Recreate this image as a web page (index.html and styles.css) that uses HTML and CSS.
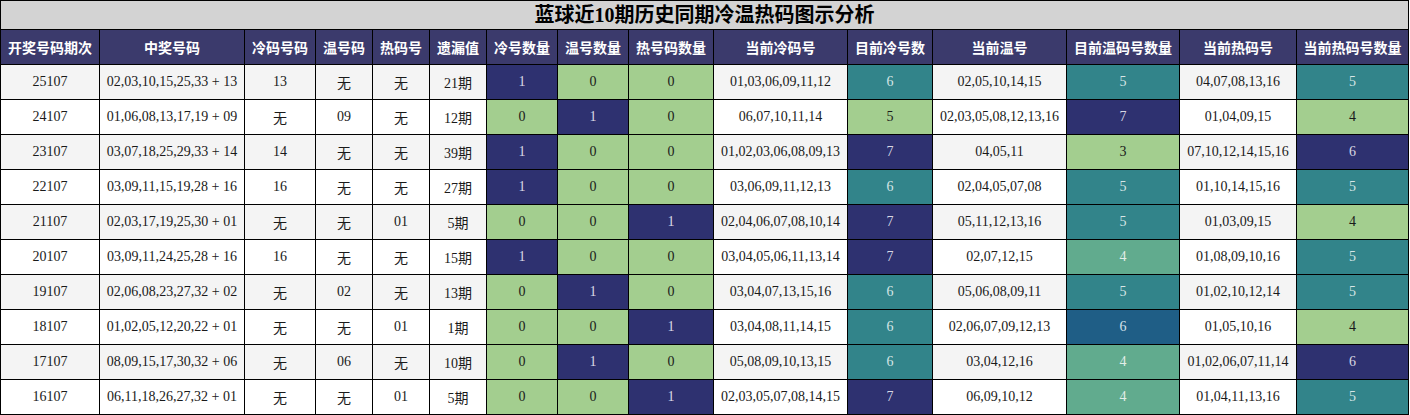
FILE: index.html
```html
<!DOCTYPE html>
<html lang="zh">
<head>
<meta charset="utf-8">
<title>蓝球近10期历史同期冷温热码图示分析</title>
<link rel="stylesheet" href="styles.css">
</head>
<body>
<table class="board">
  <colgroup>
    <col class="w99"><col class="w145"><col class="w71"><col class="w57"><col class="w57"><col class="w57">
    <col class="w71"><col class="w71"><col class="w85"><col class="w134"><col class="w85"><col class="w134">
    <col class="w113"><col class="w117"><col class="w112">
  </colgroup>
  <thead>
    <tr class="title-row"><th colspan="15" class="title">蓝球近10期历史同期冷温热码图示分析</th></tr>
    <tr class="head-row">
      <th>开奖号码期次</th><th>中奖号码</th><th>冷码号码</th><th>温号码</th><th>热码号</th><th>遗漏值</th>
      <th>冷号数量</th><th>温号数量</th><th>热号码数量</th><th>当前冷码号</th><th>目前冷号数</th>
      <th>当前温号</th><th>目前温码号数量</th><th>当前热码号</th><th>当前热码号数量</th>
    </tr>
  </thead>
  <tbody>
    <tr class="alt">
      <td>25107</td><td>02,03,10,15,25,33 + 13</td><td>13</td><td class="cjk">无</td><td class="cjk">无</td><td>21期</td>
      <td class="navy">1</td><td class="lg">0</td><td class="lg">0</td><td>01,03,06,09,11,12</td><td class="teal">6</td>
      <td>02,05,10,14,15</td><td class="teal">5</td><td>04,07,08,13,16</td><td class="teal">5</td>
    </tr>
    <tr>
      <td>24107</td><td>01,06,08,13,17,19 + 09</td><td class="cjk">无</td><td>09</td><td class="cjk">无</td><td>12期</td>
      <td class="lg">0</td><td class="navy">1</td><td class="lg">0</td><td>06,07,10,11,14</td><td class="lg">5</td>
      <td>02,03,05,08,12,13,16</td><td class="navy">7</td><td>01,04,09,15</td><td class="lg">4</td>
    </tr>
    <tr class="alt">
      <td>23107</td><td>03,07,18,25,29,33 + 14</td><td>14</td><td class="cjk">无</td><td class="cjk">无</td><td>39期</td>
      <td class="navy">1</td><td class="lg">0</td><td class="lg">0</td><td>01,02,03,06,08,09,13</td><td class="navy">7</td>
      <td>04,05,11</td><td class="lg">3</td><td>07,10,12,14,15,16</td><td class="navy">6</td>
    </tr>
    <tr>
      <td>22107</td><td>03,09,11,15,19,28 + 16</td><td>16</td><td class="cjk">无</td><td class="cjk">无</td><td>27期</td>
      <td class="navy">1</td><td class="lg">0</td><td class="lg">0</td><td>03,06,09,11,12,13</td><td class="teal">6</td>
      <td>02,04,05,07,08</td><td class="teal">5</td><td>01,10,14,15,16</td><td class="teal">5</td>
    </tr>
    <tr class="alt">
      <td>21107</td><td>02,03,17,19,25,30 + 01</td><td class="cjk">无</td><td class="cjk">无</td><td>01</td><td>5期</td>
      <td class="lg">0</td><td class="lg">0</td><td class="navy">1</td><td>02,04,06,07,08,10,14</td><td class="navy">7</td>
      <td>05,11,12,13,16</td><td class="teal">5</td><td>01,03,09,15</td><td class="lg">4</td>
    </tr>
    <tr>
      <td>20107</td><td>03,09,11,24,25,28 + 16</td><td>16</td><td class="cjk">无</td><td class="cjk">无</td><td>15期</td>
      <td class="navy">1</td><td class="lg">0</td><td class="lg">0</td><td>03,04,05,06,11,13,14</td><td class="navy">7</td>
      <td>02,07,12,15</td><td class="mg">4</td><td>01,08,09,10,16</td><td class="teal">5</td>
    </tr>
    <tr class="alt">
      <td>19107</td><td>02,06,08,23,27,32 + 02</td><td class="cjk">无</td><td>02</td><td class="cjk">无</td><td>13期</td>
      <td class="lg">0</td><td class="navy">1</td><td class="lg">0</td><td>03,04,07,13,15,16</td><td class="teal">6</td>
      <td>05,06,08,09,11</td><td class="teal">5</td><td>01,02,10,12,14</td><td class="teal">5</td>
    </tr>
    <tr>
      <td>18107</td><td>01,02,05,12,20,22 + 01</td><td class="cjk">无</td><td class="cjk">无</td><td>01</td><td>1期</td>
      <td class="lg">0</td><td class="lg">0</td><td class="navy">1</td><td>03,04,08,11,14,15</td><td class="teal">6</td>
      <td>02,06,07,09,12,13</td><td class="blue">6</td><td>01,05,10,16</td><td class="lg">4</td>
    </tr>
    <tr class="alt">
      <td>17107</td><td>08,09,15,17,30,32 + 06</td><td class="cjk">无</td><td>06</td><td class="cjk">无</td><td>10期</td>
      <td class="lg">0</td><td class="navy">1</td><td class="lg">0</td><td>05,08,09,10,13,15</td><td class="teal">6</td>
      <td>03,04,12,16</td><td class="mg">4</td><td>01,02,06,07,11,14</td><td class="navy">6</td>
    </tr>
    <tr>
      <td>16107</td><td>06,11,18,26,27,32 + 01</td><td class="cjk">无</td><td class="cjk">无</td><td>01</td><td>5期</td>
      <td class="lg">0</td><td class="lg">0</td><td class="navy">1</td><td>02,03,05,07,08,14,15</td><td class="navy">7</td>
      <td>06,09,10,12</td><td class="mg">4</td><td>01,04,11,13,16</td><td class="teal">5</td>
    </tr>
  </tbody>
</table>
</body>
</html>
```

FILE: styles.css
```css
html, body {
  margin: 0;
  padding: 0;
  background: #ffffff;
}

.board {
  border-collapse: collapse;
  table-layout: fixed;
  width: 1409px;
  font-family: "Liberation Serif", "Noto Sans CJK SC", serif;
  font-size: 14px;
  color: #1a1a1a;
}

.w99 { width: 99px; }
.w145 { width: 145px; }
.w71 { width: 71px; }
.w57 { width: 57px; }
.w85 { width: 85px; }
.w134 { width: 134px; }
.w113 { width: 113px; }
.w117 { width: 117px; }
.w112 { width: 112px; }

.board th,
.board td {
  border: 1px solid #000000;
  padding: 0 2px;
  text-align: center;
  vertical-align: middle;
  white-space: nowrap;
  overflow: hidden;
}

.title-row { height: 29px; }

.title {
  background: #d3d3d3;
  color: #000000;
  font-family: "Liberation Serif", "Noto Sans CJK SC", serif;
  font-size: 20px;
  font-weight: bold;
  border-bottom: 2px solid #000000;
  line-height: 24px;
}

.head-row { height: 35px; }

.head-row th {
  background: #3b3a6c;
  color: #ffffff;
  font-family: "Noto Sans CJK SC", sans-serif;
  font-size: 14px;
  font-weight: bold;
}

.board tbody tr { height: 35px; background: #ffffff; }
.board tbody tr.alt { background: #f4f4f4; }

.cjk {
  font-family: "Noto Sans CJK SC", sans-serif;
  padding-top: 3px;
}

.board td.navy { background: #2e3170; color: #d8d8e4; }
.board td.lg { background: #a3ce8f; color: #1a1a1a; }
.board td.teal { background: #32848a; color: #d6e6e6; }
.board td.mg { background: #61ab8e; color: #e2eee8; }
.board td.blue { background: #1f5e86; color: #d6e2ea; }
```
